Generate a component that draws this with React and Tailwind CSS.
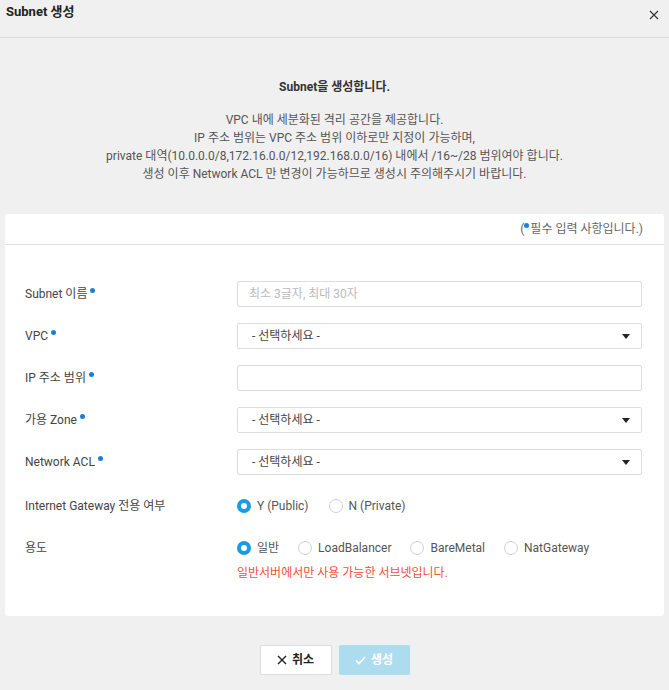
import React from "react";

const Dot = () => (
  <span className="inline-block w-[5px] h-[5px] rounded-full bg-[#1a7fd8] ml-[3px] relative -top-[5px]" />
);

function Radio({ checked, label }) {
  return (
    <label className="flex items-center gap-[6px]">
      {checked ? (
        <span className="w-[14px] h-[14px] rounded-full bg-[#1a9be6] flex items-center justify-center">
          <span className="w-[6px] h-[6px] rounded-full bg-white" />
        </span>
      ) : (
        <span className="w-[14px] h-[14px] rounded-full border border-[#d0d0d0] bg-white" />
      )}
      <span className="text-[12px] text-[#555]">{label}</span>
    </label>
  );
}

function Select() {
  return (
    <div className="flex-1 h-[26px] border border-[#dedede] rounded-[2px] flex items-center justify-between pl-[14px] pr-[11px]">
      <span className="text-[12px] text-[#444]">- 선택하세요 -</span>
      <svg width="8" height="5" viewBox="0 0 8 5"><path d="M0 0H8L4 5Z" fill="#222" /></svg>
    </div>
  );
}

function Row({ label, required, children, className = "" }) {
  return (
    <div className={"flex items-center " + className}>
      <div className="w-[212px] text-[12px] text-[#444]">
        {label}
        {required && <Dot />}
      </div>
      <div className="flex-1 flex items-center">{children}</div>
    </div>
  );
}

export default function App() {
  return (
    <div
      className="w-full h-[690px] bg-[#f0f0f0] overflow-hidden"
      style={{ fontFamily: 'Roboto, "Noto Sans CJK KR", sans-serif' }}
    >
      <div className="h-[38px] border-b border-[#dcdcdc] flex justify-between px-[6px] pt-[2px]">
        <div className="text-[13px] font-bold text-[#222] leading-[20px]">Subnet 생성</div>
        <svg className="mt-[8px] mr-[4px]" width="10" height="10" viewBox="0 0 10 10">
          <path d="M1 1L9 9M9 1L1 9" stroke="#333" strokeWidth="1.2" />
        </svg>
      </div>

      <div className="text-center mt-[40px]">
        <div className="text-[12px] font-bold text-[#333] leading-[18px]">Subnet을 생성합니다.</div>
        <div className="mt-[15px] text-[12px] text-[#555] leading-[18px]">
          <div>VPC 내에 세분화된 격리 공간을 제공합니다.</div>
          <div>IP 주소 범위는 VPC 주소 범위 이하로만 지정이 가능하며,</div>
          <div>private 대역(10.0.0.0/8,172.16.0.0/12,192.168.0.0/16) 내에서 /16~/28 범위여야 합니다.</div>
          <div>생성 이후 Network ACL 만 변경이 가능하므로 생성시 주의해주시기 바랍니다.</div>
        </div>
      </div>

      <div className="mx-[5px] mt-[31px] bg-white rounded-[3px]">
        <div className="h-[31px] border-b border-[#e2e2e2] flex items-center justify-end pr-[21px] text-[12px] text-[#666]">
          (<span className="inline-block w-[5px] h-[5px] rounded-full bg-[#1a7fd8] relative -top-[4px] mr-[1px]" />필수 입력 사항입니다.)
        </div>
        <div className="pl-[20px] pr-[22px] pt-[36px] pb-[34px] flex flex-col">
          <Row label="Subnet 이름" required>
            <div className="flex-1 h-[26px] border border-[#dedede] rounded-[2px] flex items-center pl-[11px] text-[12px] text-[#bbb]">
              최소 3글자, 최대 30자
            </div>
          </Row>
          <Row label="VPC" required className="mt-[16px]"><Select /></Row>
          <Row label="IP 주소 범위" required className="mt-[16px]">
            <div className="flex-1 h-[26px] border border-[#dedede] rounded-[2px]" />
          </Row>
          <Row label="가용 Zone" required className="mt-[16px]"><Select /></Row>
          <Row label="Network ACL" required className="mt-[16px]"><Select /></Row>
          <Row label="Internet Gateway 전용 여부" className="mt-[18px] h-[26px]">
            <div className="flex items-center gap-[20px]">
              <Radio checked label="Y (Public)" />
              <Radio label="N (Private)" />
            </div>
          </Row>
          <Row label="용도" className="mt-[16px] h-[26px]">
            <div className="flex items-center gap-[19px]">
              <Radio checked label="일반" />
              <Radio label="LoadBalancer" />
              <Radio label="BareMetal" />
              <Radio label="NatGateway" />
            </div>
          </Row>
          <div className="pl-[212px] mt-[3px] text-[12px] text-[#f0503e] leading-[18px]">
            일반서버에서만 사용 가능한 서브넷입니다.
          </div>
        </div>
      </div>

      <div className="flex justify-center gap-[7px] mt-[29px]">
        <button className="w-[72px] h-[30px] bg-white border border-[#dcdcdc] rounded-[2px] flex items-center justify-center gap-[5px] text-[12px] font-bold text-[#222]">
          <svg width="10" height="10" viewBox="0 0 10 10"><path d="M1 1L9 9M9 1L1 9" stroke="#222" strokeWidth="1.4" /></svg>
          취소
        </button>
        <button className="w-[71px] h-[30px] bg-[#aedcef] rounded-[2px] flex items-center justify-center gap-[5px] text-[12px] font-bold text-white">
          <svg width="11" height="9" viewBox="0 0 11 9"><path d="M1 4.5L4 7.5L10 1" stroke="white" strokeWidth="1.6" fill="none" /></svg>
          생성
        </button>
      </div>
    </div>
  );
}
